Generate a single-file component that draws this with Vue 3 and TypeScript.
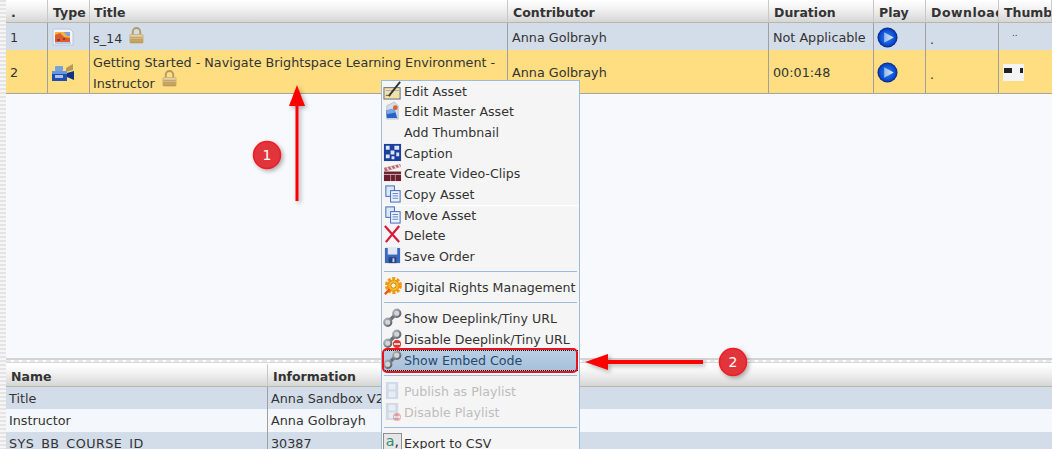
<script setup lang="ts">
interface Cell { text?: string; icon?: string; lock?: boolean; cls?: string }
interface MenuItem { label?: string; icon?: string; disabled?: boolean; active?: boolean; sep?: boolean; rule?: boolean }

const topHead: string[] = ['.', 'Type', 'Title', 'Contributor', 'Duration', 'Play', 'Download', 'Thumbnail']
const topRows: { cls: string; cells: Cell[] }[] = [
  {
    cls: 'blue',
    cells: [
      { text: '1' },
      { icon: 'pic' },
      { text: 's_14', lock: true, cls: 'low' },
      { text: 'Anna Golbrayh' },
      { text: 'Not Applicable' },
      { icon: 'play' },
      { text: '.', cls: 'low' },
      { icon: 'dots' }
    ]
  },
  {
    cls: 'yellow',
    cells: [
      { text: '2' },
      { icon: 'cam' },
      { text: 'Getting Started - Navigate Brightspace Learning Environment - Instructor', lock: true },
      { text: 'Anna Golbrayh' },
      { text: '00:01:48' },
      { icon: 'play' },
      { text: '.', cls: 'low' },
      { icon: 'thumb' }
    ]
  }
]
const infoRows: string[][] = [
  ['Title', 'Anna Sandbox V2'],
  ['Instructor', 'Anna Golbrayh'],
  ['SYS_BB_COURSE_ID', '30387']
]
const menu: MenuItem[] = [
  { label: 'Edit Asset', icon: 'edit' },
  { label: 'Edit Master Asset', icon: 'master' },
  { label: 'Add Thumbnail' },
  { label: 'Caption', icon: 'caption' },
  { label: 'Create Video-Clips', icon: 'clap' },
  { label: 'Copy Asset', icon: 'copy', rule: true },
  { label: 'Move Asset', icon: 'copy' },
  { label: 'Delete', icon: 'del' },
  { label: 'Save Order', icon: 'save' },
  { sep: true },
  { label: 'Digital Rights Management', icon: 'gear' },
  { sep: true },
  { label: 'Show Deeplink/Tiny URL', icon: 'link' },
  { label: 'Disable Deeplink/Tiny URL', icon: 'linkoff' },
  { label: 'Show Embed Code', icon: 'link', active: true },
  { sep: true },
  { label: 'Publish as Playlist', icon: 'film', disabled: true },
  { label: 'Disable Playlist', icon: 'filmoff', disabled: true },
  { sep: true },
  { label: 'Export to CSV', icon: 'csv' }
]
</script>

<template>
  <div class="page">
    <svg class="defs" width="0" height="0" aria-hidden="true">
      <defs>
        <linearGradient id="lockG" x1="0" y1="0" x2="0" y2="1">
          <stop offset="0" stop-color="#ecdcae" />
          <stop offset="1" stop-color="#bd9650" />
        </linearGradient>
        <radialGradient id="playG" cx=".5" cy=".5" r=".55">
          <stop offset="0" stop-color="#2c86f2" />
          <stop offset=".72" stop-color="#0b48d0" />
          <stop offset=".9" stop-color="#06247a" />
          <stop offset="1" stop-color="#020c2c" />
        </radialGradient>
        <linearGradient id="triG" x1="0" y1="0" x2="1" y2="0">
          <stop offset="0" stop-color="#8fb8ec" />
          <stop offset="1" stop-color="#eceae6" />
        </linearGradient>
        <linearGradient id="chainG" x1="0" y1="0" x2="1" y2="1">
          <stop offset="0" stop-color="#b8bcc2" />
          <stop offset="1" stop-color="#55595f" />
        </linearGradient>
        <radialGradient id="gearG" cx=".5" cy=".5" r=".55">
          <stop offset="0" stop-color="#fff0b0" />
          <stop offset=".6" stop-color="#f8b820" />
          <stop offset="1" stop-color="#ea7a10" />
        </radialGradient>
        <symbol id="i-lock" viewBox="0 0 16 18">
          <path d="M4 8V5a4 4 0 0 1 8 0v3" fill="none" stroke="#b39a63" stroke-width="2" />
          <rect x="1" y="8" width="14" height="9" rx="1" fill="url(#lockG)" stroke="#b8985a" stroke-width=".6" />
          <path d="M2 11h12M2 13.500h12" stroke="#a9874a" stroke-width=".6" />
        </symbol>
        <symbol id="i-pic" viewBox="0 0 22 18">
          <path d="M1 1h17l3 3v13H1z" fill="#f3f6fb" stroke="#b4c6dc" />
          <rect x="3" y="4" width="15" height="10" fill="#f2b43a" />
          <path d="M3 7l5-2 4 4 6 1v4H3z" fill="#de5a2c" />
          <path d="M12 4h6v4h-3z" fill="#7f9fd8" />
          <path d="M5 11h3v2H5zM11 10h2v2h-2z" fill="#8a3a3a" />
          <path d="M3 15h16" stroke="#7f9ccb" />
        </symbol>
        <symbol id="i-cam" viewBox="0 0 22 18">
          <path d="M0 7h15v10H0z" fill="#1f4fb0" />
          <path d="M0 7h15v3H0z" fill="#6a97dc" />
          <path d="M15 9l7-2v9l-7-3z" fill="#0f3284" />
          <path d="M14 4l7-4v6l-7 2z" fill="#b59a58" />
          <rect x="3" y="11" width="8" height="3" fill="#a9c3ec" />
          <rect x="3" y="2" width="8" height="5" rx="1" fill="#7aa0de" />
        </symbol>
        <symbol id="i-play" viewBox="0 0 22 22">
          <circle cx="11" cy="11" r="10.500" fill="url(#playG)" />
          <path d="M7.500 5.500l10 5.500-10 5.500z" fill="url(#triG)" />
        </symbol>
        <symbol id="i-edit" viewBox="0 0 20 20">
          <rect x="1" y="7" width="17" height="12" fill="#f2e0a6" stroke="#5d6a7a" />
          <path d="M3 10h14" stroke="#9ab0c8" />
          <path d="M6 16L18 1" stroke="#333" stroke-width="2" />
          <path d="M3 15c2 1 3-1 5 0" stroke="#555" fill="none" />
        </symbol>
        <symbol id="i-master" viewBox="0 0 20 20">
          <path d="M4 5l8-4 4 4v14H4z" fill="#d7dde8" stroke="#9aa6b8" stroke-width=".6" />
          <path d="M3 10l9-2 3 10H4z" fill="#2763c6" />
          <path d="M3 10l9-2 1 4-9 2z" fill="#7ba5e6" />
          <circle cx="13" cy="7" r="2.500" fill="#d8642a" />
        </symbol>
        <symbol id="i-caption" viewBox="0 0 20 20">
          <rect x="1" y="1" width="18" height="18" fill="#1c3f9e" />
          <path d="M3 3h4v4H3zM12 3h5v4h-5zM8 8h4v4H8zM3 12h4v4H3zM14 10h3v4h-3zM9 14h3v3H9z" fill="#dde6f7" />
        </symbol>
        <symbol id="i-clap" viewBox="0 0 20 20">
          <path d="M1 9h18v10H1z" fill="#6a1f2e" />
          <path d="M1 5l17-4 1 3L2 9z" fill="#b86a74" />
          <path d="M4 4.500l2 3M8 3.500l2 3M12 2.500l2 3M16 1.500l2 3" stroke="#f0dfe0" stroke-width="1.400" />
          <path d="M1 12h18" stroke="#d8b6ba" />
          <path d="M8 12v7M13 12v7" stroke="#d8b6ba" stroke-width=".7" />
        </symbol>
        <symbol id="i-copy" viewBox="0 0 20 20">
          <rect x="3" y="2" width="9" height="11" fill="#dbe6f7" stroke="#3a66b8" />
          <rect x="8" y="7" width="10" height="12" fill="#eef3fb" stroke="#3a66b8" />
          <path d="M10 10h6M10 12.500h6M10 15h6" stroke="#5a82c8" />
        </symbol>
        <symbol id="i-del" viewBox="0 0 20 20">
          <path d="M2 1l15 17M17 1L3 18" stroke="#d81c3c" stroke-width="2.400" fill="none" />
        </symbol>
        <symbol id="i-save" viewBox="0 0 20 20">
          <path d="M2 2h16v16H2z" fill="#3c68bd" />
          <rect x="5" y="2" width="10" height="7" fill="#dfe7f5" />
          <rect x="6" y="12" width="8" height="6" fill="#24417e" />
          <rect x="10" y="13" width="2" height="4" fill="#cbd7ee" />
        </symbol>
        <symbol id="i-gear" viewBox="0 0 20 20">
          <circle cx="11" cy="9" r="7" fill="none" stroke="#f09a10" stroke-width="4" stroke-dasharray="3 1.500" />
          <circle cx="11" cy="9" r="6.500" fill="url(#gearG)" />
          <circle cx="11" cy="9" r="2.800" fill="#fdf2c8" stroke="#c87810" />
          <path d="M2 18l5-5" stroke="#e85a10" stroke-width="2.500" />
        </symbol>
        <symbol id="i-link" viewBox="0 0 20 20">
          <path d="M6 14l8-8" stroke="#6b6f75" stroke-width="3.500" />
          <circle cx="5" cy="15" r="3.800" fill="#d2d5d9" stroke="url(#chainG)" stroke-width="2.200" />
          <circle cx="14.500" cy="5.500" r="3.800" fill="#d2d5d9" stroke="url(#chainG)" stroke-width="2.200" />
        </symbol>
        <symbol id="i-film" viewBox="0 0 20 20">
          <rect x="3" y="1" width="13" height="18" fill="#c8d4e4" />
          <rect x="6" y="3" width="7" height="6" fill="#e6ecf4" />
          <rect x="6" y="11" width="7" height="6" fill="#e6ecf4" />
        </symbol>
        <symbol id="i-csv" viewBox="0 0 20 20">
          <rect x=".5" y=".5" width="19" height="19" fill="#e6e6e6" stroke="#8a8a8a" />
          <text x="3" y="14" font-size="15" font-family="DejaVu Sans" fill="#2f8a72">a<tspan fill="#333">,</tspan></text>
        </symbol>
      </defs>
    </svg>

    <div class="body">
      <div class="stripe"></div>
      <div class="main">
        <section class="upper">
          <div class="grid-top head">
            <div v-for="h in topHead" :key="h" class="hcell">{{ h }}</div>
          </div>
          <div v-for="row in topRows" :key="row.cells[0].text" class="grid-top" :class="row.cls">
            <div v-for="(c, i) in row.cells" :key="i" class="cell" :class="c.cls">
              <span v-if="c.text">{{ c.text }}</span>
              <svg v-if="c.lock" class="lock"><use href="#i-lock" /></svg>
              <svg v-if="c.icon === 'pic'" class="type"><use href="#i-pic" /></svg>
              <svg v-if="c.icon === 'cam'" class="type"><use href="#i-cam" /></svg>
              <svg v-if="c.icon === 'play'" class="play"><use href="#i-play" /></svg>
              <span v-if="c.icon === 'dots'" class="dots">..</span>
              <span v-if="c.icon === 'thumb'" class="thumb"><i></i><b></b></span>
            </div>
          </div>
        </section>

        <div class="splitter"></div>

        <section class="lower">
          <div class="grid-low head low-head">
            <div class="hcell">Name</div>
            <div class="hcell">Information</div>
          </div>
          <div v-for="(r, i) in infoRows" :key="r[0]" class="grid-low lrow" :class="i % 2 ? 'pale' : 'blue'">
            <div class="lcell">{{ r[0] }}</div>
            <div class="lcell">{{ r[1] }}</div>
          </div>
        </section>
      </div>
    </div>

    <ul class="menu">
      <template v-for="(m, i) in menu" :key="i">
        <li v-if="m.sep" class="sep"></li>
        <li v-else class="item" :class="{ disabled: m.disabled, active: m.active, rule: m.rule }">
          <span class="ico">
            <svg v-if="m.icon === 'linkoff'" class="ic"><use href="#i-link" /></svg>
            <svg v-else-if="m.icon === 'filmoff'" class="ic"><use href="#i-film" /></svg>
            <svg v-else-if="m.icon" class="ic"><use :href="'#i-' + m.icon" /></svg>
            <i v-if="m.icon === 'linkoff' || m.icon === 'filmoff'" class="badge"></i>
          </span>
          <span>{{ m.label }}</span>
        </li>
      </template>
    </ul>

    <div class="focus-ring"></div>

    <svg class="arrows" width="1052" height="449" viewBox="0 0 1052 449">
      <g class="shadow">
        <path d="M295.500 105h3v96h-3z" fill="#f00" />
        <path d="M297 85l8 21h-16z" fill="#f00" />
        <path d="M703 360v4h-96v-4z" fill="#f00" />
        <path d="M585 362l23-8v16z" fill="#f00" />
        <circle cx="267" cy="155" r="13.500" fill="#e2343b" stroke="#f01c22" stroke-width="1.500" />
        <circle cx="733" cy="362" r="13.500" fill="#e2343b" stroke="#f01c22" stroke-width="1.500" />
      </g>
    </svg>
    <span class="num one">1</span>
    <span class="num two">2</span>
  </div>
</template>

<style>
html, body { margin: 0; padding: 0; background: #fff; }
</style>

<style scoped>
.page {
  position: relative;
  width: 1052px;
  height: 449px;
  overflow: hidden;
  font-family: "DejaVu Sans", Verdana, sans-serif;
  font-size: 12.750px;
  color: #333;
  background: #f8f9fd;
}
.defs { position: absolute; }
.body { display: flex; height: 100%; }
.stripe {
  width: 6px;
  flex: none;
  background: repeating-linear-gradient(#e4e4e4 0 2px, #f6f6f6 2px 4px);
}
.main { flex: 1; min-width: 0; display: flex; flex-direction: column; }
.upper { height: 358px; flex: none; background: #f8f9fd; }
.splitter {
  height: 5px;
  flex: none;
  border-top: 2px solid #d4d4d4;
  border-bottom: 1px solid #d8d8d8;
  box-sizing: border-box;
  background: repeating-linear-gradient(90deg, #e8e8e8 0 5px, #fff 5px 8px);
}
.lower { flex: 1; background: #fff; padding-top: 1px; }

.grid-top {
  display: grid;
  grid-template-columns: 42px 42px 418px 261px 105px 52px 73px 53px;
}
.head {
  background: linear-gradient(#fff 0, #f4f4f4 35%, #d6d6d6 100%);
  border-bottom: 1px solid #b8b8a8;
  font-weight: 700;
  font-size: 12.500px;
}
.grid-top.head { height: 22px; }
.hcell {
  box-sizing: border-box;
  padding: 5px 0 0 5px;
  border-right: 1px solid #c8c8c8;
  white-space: nowrap;
  overflow: hidden;
  line-height: 16px;
}
.grid-top.head .hcell:nth-child(3) { padding-left: 4px; }
.grid-top.head .hcell:nth-child(7) { letter-spacing: .5px; }
.blue { background: #d3dde9; }
.yellow { background: #fede81; border-bottom: 1px solid #a5a5a5; }
.pale { background: #f4f7fb; }
.grid-top.blue { height: 27px; }
.grid-top.yellow { height: 43px; }
.cell {
  box-sizing: border-box;
  padding: 1px 4px 0;
  border-right: 1px solid #a0a0a0;
  display: flex;
  flex-wrap: wrap;
  align-items: center;
  align-content: center;
  line-height: 21px;
  overflow: hidden;
}
.yellow .cell { padding-top: 2px; }
.cell:nth-child(3) { display: block; padding: 4px 3px 0; }
.yellow .cell:nth-child(3) { padding: 2px 3px 0; line-height: 21px; }
.low { padding-top: 5px; }
.yellow .low { padding-top: 6px; }
.cell:last-child { border-right: none; }
.lock { width: 15px; height: 17px; margin-left: 7px; vertical-align: top; margin-top: -3px; }
.blue .lock { margin-top: -1px; }
.type { width: 22px; height: 18px; }
.play { width: 21px; height: 21px; margin-left: -1px; }
.dots { font-size: 9px; margin: -8px 0 0 9px; }
.thumb {
  position: relative;
  display: block;
  width: 21px;
  height: 17px;
  background: #f4f4f4;
}
.thumb i, .thumb b {
  position: absolute;
  top: 4px;
  height: 5px;
  background: #222;
}
.thumb i { left: 1px; width: 8px; }
.thumb b { right: 1px; width: 3px; }

.grid-low { display: grid; grid-template-columns: 262px 1fr; }
.low-head { height: 22px; }
.low-head .hcell:last-child { border-right: none; }
.lrow { height: 22.400px; }
.lcell {
  box-sizing: border-box;
  padding: 4px 0 0 3px;
  line-height: 16px;
  border-right: 1px solid #a0a0a0;
  white-space: nowrap;
}
.lcell:last-child { border-right: none; }
.lrow:nth-child(4) .lcell:first-child { letter-spacing: .45px; }

.menu {
  position: absolute;
  left: 381px;
  top: 80px;
  width: 199px;
  height: 380px;
  box-sizing: border-box;
  margin: 0;
  padding: 0 1px;
  list-style: none;
  background: #f5f5f5;
  border: 1px solid #9dbcdc;
  font-size: 12.600px;
}
.item {
  position: relative;
  display: flex;
  align-items: center;
  height: 20.700px;
  white-space: nowrap;
}
.item:first-child { height: 20.300px; }
.item.rule { box-shadow: 0 1px 0 #fff; }
.ico {
  position: relative;
  flex: none;
  width: 21px;
  height: 19px;
  display: block;
}
.ic { position: absolute; left: 0; top: -1px; width: 19px; height: 19px; }
.badge {
  position: absolute;
  left: 10px;
  top: 10px;
  width: 8px;
  height: 8px;
  border-radius: 50%;
  background: #e2342c;
}
.badge::after {
  content: "";
  position: absolute;
  left: 1px;
  right: 1px;
  top: 3px;
  height: 2px;
  background: #f8d0d0;
}
.disabled { color: #bdbdbd; }
.disabled .ic { opacity: .8; }
.disabled .badge { opacity: .35; }
.active {
  background: linear-gradient(#b9cfe4, #a7c0da);
  color: #254a70;
  outline: 1px dotted #111;
  outline-offset: -1px;
}
.sep {
  height: 1px;
  margin: 4.500px 1px 5px 1px;
  background: #9dbcdc;
}
.focus-ring {
  position: absolute;
  left: 382px;
  top: 348px;
  width: 196px;
  height: 25px;
  box-sizing: border-box;
  border: 2px solid #e8121c;
  border-radius: 5px;
}
.arrows { position: absolute; left: 0; top: 0; pointer-events: none; }
.shadow { filter: drop-shadow(2px 2px 2px rgba(0, 0, 0, .3)); }
.num {
  position: absolute;
  width: 20px;
  text-align: center;
  color: #fff;
  font-size: 14px;
  line-height: 16px;
}
.one { left: 257px; top: 147px; }
.two { left: 723px; top: 354px; }
</style>
